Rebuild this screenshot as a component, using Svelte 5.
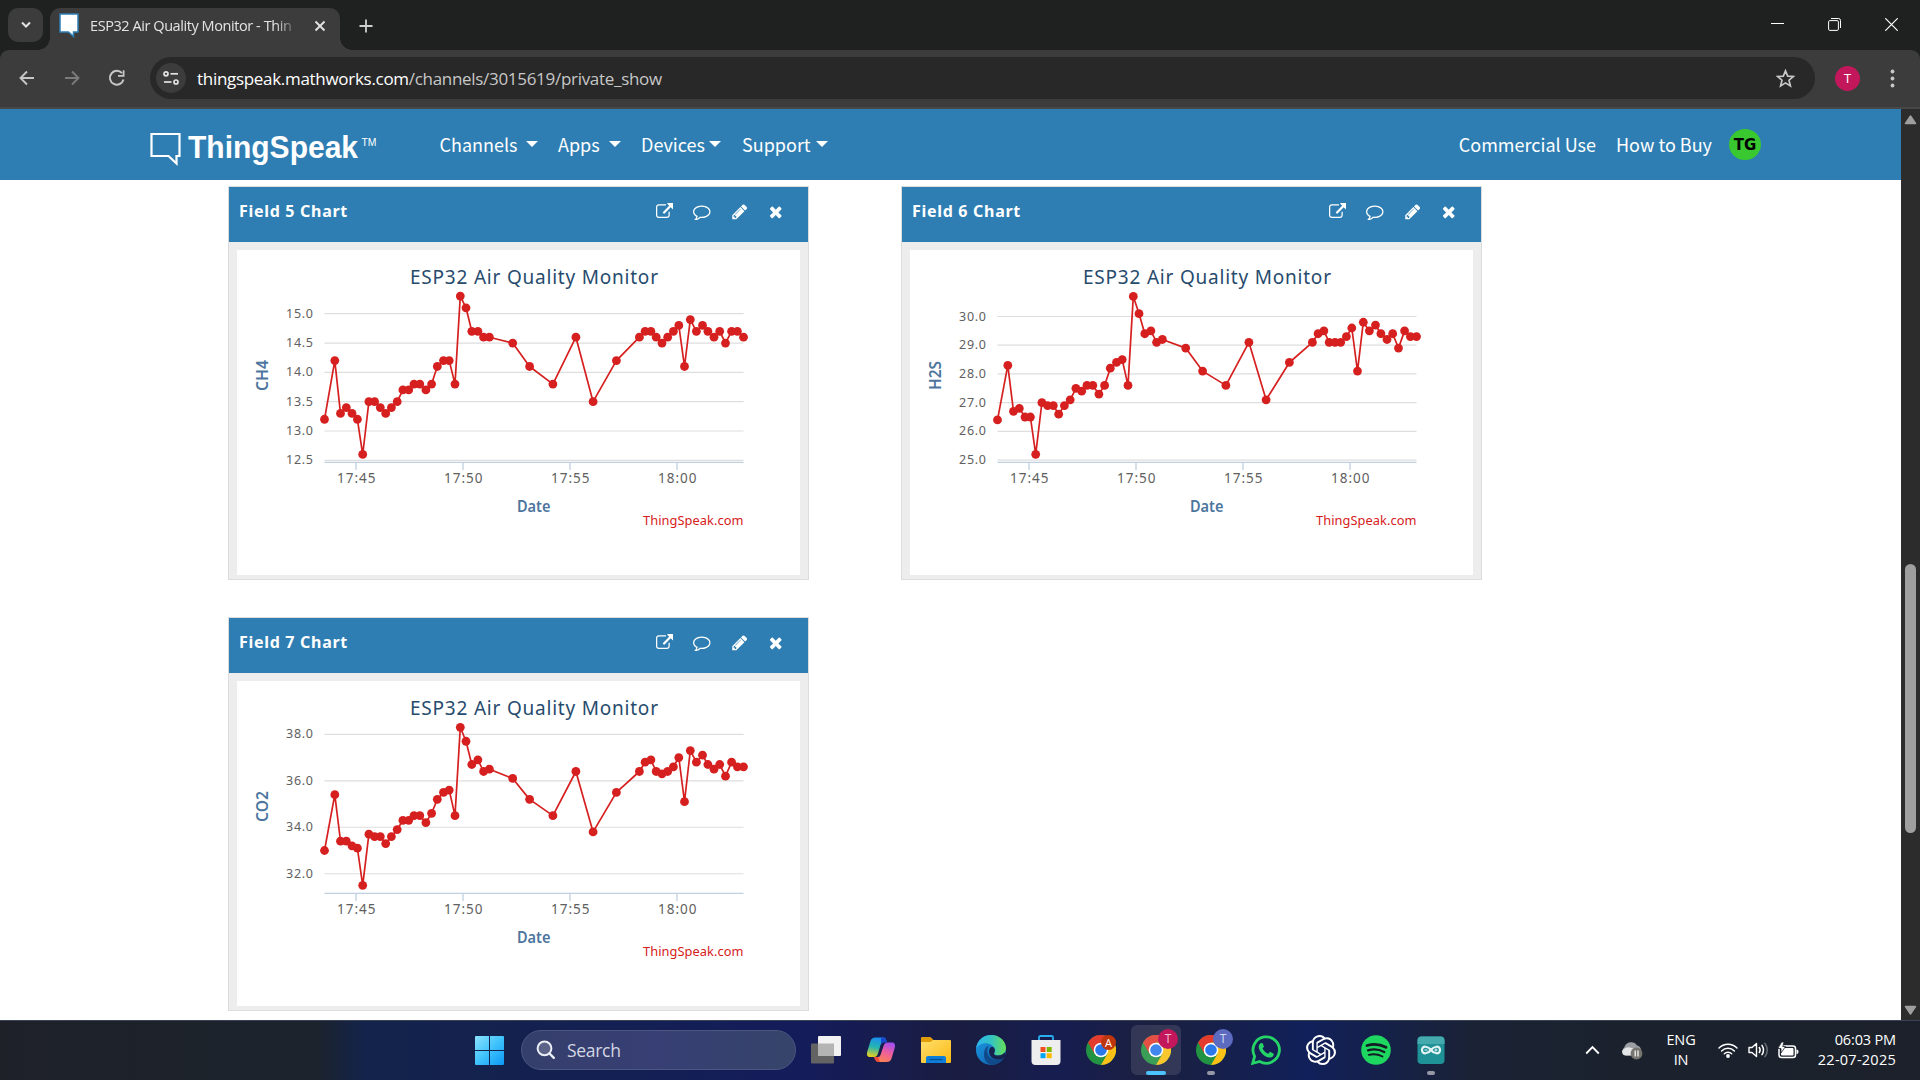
<script>
  // Horizontal sample positions shared by the three charts, in chart pixels
  const xs = [
    87.5, 97.8, 103.5, 109.3, 115, 120.4, 125.7, 131.9, 137.6, 143.3, 148.7, 154.4, 160.2, 165.9, 171.7, 177,
    182.8, 188.9, 194.6, 200.3, 206.5, 212.2, 218, 223.3, 229, 234.8, 240.9, 246.6, 252.4, 275.7, 292.6, 315.9,
    338.9, 356.1, 379.4, 402.4, 408.1, 413.9, 419.2, 425, 430.7, 436.4, 441.8, 447.5, 453.3, 459.4, 465.5,
    470.9, 477, 482.7, 488.5, 494.6, 500.4, 506.5
  ];

  const charts = [
    {
      name: 'Field 5 Chart', axis: 'CH4', ticks: [15, 14.5, 14, 13.5, 13, 12.5], top: 15, topY: 63.7, scale: 58.65,
      data: [13.2, 14.2, 13.3, 13.4, 13.3, 13.2, 12.6, 13.5, 13.5, 13.4, 13.3, 13.4, 13.5, 13.7, 13.7, 13.8, 13.8,
        13.7, 13.8, 14.1, 14.2, 14.2, 13.8, 15.3, 15.1, 14.7, 14.7, 14.6, 14.6, 14.5, 14.1, 13.8, 14.6, 13.5, 14.2,
        14.6, 14.7, 14.7, 14.6, 14.5, 14.6, 14.7, 14.8, 14.1, 14.9, 14.7, 14.8, 14.7, 14.6, 14.7, 14.5, 14.7, 14.7, 14.6]
    },
    {
      name: 'Field 6 Chart', axis: 'H2S', ticks: [30, 29, 28, 27, 26, 25], top: 30, topY: 66.5, scale: 28.72,
      data: [26.4, 28.3, 26.7, 26.8, 26.5, 26.5, 25.2, 27.0, 26.9, 26.9, 26.6, 26.9, 27.1, 27.5, 27.4, 27.6, 27.6,
        27.3, 27.6, 28.2, 28.4, 28.5, 27.6, 30.7, 30.1, 29.4, 29.5, 29.1, 29.2, 28.9, 28.1, 27.6, 29.1, 27.1, 28.4,
        29.1, 29.4, 29.5, 29.1, 29.1, 29.1, 29.3, 29.6, 28.1, 29.8, 29.5, 29.7, 29.4, 29.2, 29.4, 28.9, 29.5, 29.3, 29.3]
    },
    {
      name: 'Field 7 Chart', axis: 'CO2', ticks: [38, 36, 34, 32], top: 38, topY: 53.3, scale: 23.24,
      data: [33.0, 35.4, 33.4, 33.4, 33.2, 33.1, 31.5, 33.7, 33.6, 33.6, 33.3, 33.6, 33.9, 34.3, 34.3, 34.5, 34.5,
        34.2, 34.6, 35.2, 35.5, 35.6, 34.5, 38.3, 37.7, 36.7, 36.9, 36.4, 36.5, 36.1, 35.2, 34.5, 36.4, 33.8, 35.5,
        36.4, 36.8, 36.9, 36.4, 36.3, 36.4, 36.6, 37.0, 35.1, 37.3, 36.8, 37.1, 36.7, 36.5, 36.7, 36.2, 36.8, 36.6, 36.6]
    }
  ];

  const times = [['17:45', 119], ['17:50', 226], ['17:55', 333], ['18:00', 440]];
  const yOf = (c, v) => c.topY + (c.top - v) * c.scale;
  const line = (c) => c.data.map((v, i) => `${xs[i]},${yOf(c, v).toFixed(1)}`).join(' ');
</script>

{#snippet chrome()}
  <svg class="app-icon" viewBox="0 0 30 30">
    <circle cx="15" cy="15" r="15" fill="#229342" />
    <path d="M2 7.500A15 15 0 0 1 28 7.500H15L8.500 18.700z" fill="#e33b2e" />
    <path d="M28 7.500A15 15 0 0 1 15 30L21.500 18.750L15 7.500z" fill="#fbc116" />
    <circle cx="15" cy="15" r="7.300" fill="#fff" />
    <circle cx="15" cy="15" r="5.800" fill="#2a78ea" />
  </svg>
{/snippet}

<div class="screen">
  <header class="tabs">
    <button class="tab-search" aria-label="Search tabs">
      <svg width="12" height="8" viewBox="0 0 12 8"><path d="M2 1.500L6 5.500L10 1.500" fill="none" stroke="#e3e3e3" stroke-width="2" /></svg>
    </button>
    <div class="tab">
      <svg class="favicon" width="21" height="25" viewBox="0 0 21 25"><path d="M1 1H19V19H14.500V23.500L9.500 19H1z" fill="#fff" stroke="#2e7eb3" stroke-width="1.500" /></svg>
      <span class="tab-title">ESP32 Air Quality Monitor - Thin</span>
      <svg width="12" height="12" viewBox="0 0 12 12"><path d="M1.500 1.500L10.500 10.500M10.500 1.500L1.500 10.500" stroke="#e3e3e3" stroke-width="1.900" /></svg>
    </div>
    <svg class="plus" width="14" height="14" viewBox="0 0 14 14"><path d="M7 0.500V13.500M0.500 7H13.500" stroke="#d0d0d0" stroke-width="1.800" /></svg>
    <div class="window-buttons">
      <svg width="13" height="13" viewBox="0 0 13 13"><path d="M0 5.500H13" stroke="#fff" /></svg>
      <svg width="13" height="13" viewBox="0 0 13 13"><rect x="0.600" y="2.600" width="9.800" height="9.800" rx="1.200" fill="none" stroke="#fff" /><path d="M3 0.500H10.500Q12.500 0.500 12.500 2.500V10" fill="none" stroke="#fff" /></svg>
      <svg width="13" height="13" viewBox="0 0 13 13"><path d="M0.300 0.300L12.700 12.700M12.700 0.300L0.300 12.700" stroke="#fff" stroke-width="1.200" /></svg>
    </div>
  </header>

  <div class="toolbar">
    <svg class="nav-icon" width="20" height="20" viewBox="0 0 20 20"><path d="M17 10H4M10 3.500L3.500 10L10 16.500" fill="none" stroke="#c7c7c7" stroke-width="1.900" /></svg>
    <svg class="nav-icon" width="20" height="20" viewBox="0 0 20 20"><path d="M3 10H16M10 3.500L16.500 10L10 16.500" fill="none" stroke="#7b7b7b" stroke-width="1.900" /></svg>
    <svg class="nav-icon" width="20" height="20" viewBox="0 0 20 20"><path d="M16.500 11.500A6.900 6.900 0 1 1 15 5.200" fill="none" stroke="#c7c7c7" stroke-width="2" /><path d="M17.500 2.200V8.800H11V7L15.700 6.900V2.200z" fill="#c7c7c7" /></svg>
    <div class="address">
      <span class="site-info">
        <svg width="16" height="16" viewBox="0 0 16 16"><g fill="none" stroke="#e3e3e3" stroke-width="1.700"><circle cx="3" cy="3.800" r="2" /><path d="M7.500 3.800H15" /><circle cx="13" cy="12" r="2" /><path d="M1 12H8.500" /></g></svg>
      </span>
      <span class="url"><b>thingspeak.mathworks.com</b>/channels/3015619/private_show</span>
      <svg class="star" width="19" height="19" viewBox="0 0 19 19"><path d="M9.500 1.800L11.700 7.100L17.300 7.500L13 11.200L14.400 16.900L9.500 13.900L4.600 16.900L6 11.200L1.700 7.500L7.300 7.100z" fill="none" stroke="#c7c7c7" stroke-width="1.700" /></svg>
    </div>
    <span class="profile">T</span>
    <svg class="dots" width="5" height="19" viewBox="0 0 5 19"><g fill="#c7c7c7"><circle cx="2.500" cy="2.500" r="1.900" /><circle cx="2.500" cy="9.500" r="1.900" /><circle cx="2.500" cy="16.500" r="1.900" /></g></svg>
  </div>

  <div class="viewport">
    <main>
      <nav>
        <svg class="logo" width="228" height="36" viewBox="0 0 228 36">
          <path d="M1.500 3H29.500V25H26.500V32.500L18.500 25H1.500z" fill="none" stroke="#fff" stroke-width="2.200" />
          <text class="brand" x="38" y="27" textLength="170" lengthAdjust="spacingAndGlyphs">ThingSpeak</text>
          <text class="tm" x="211.500" y="14.500" textLength="15" lengthAdjust="spacingAndGlyphs">TM</text>
        </svg>
        <a class="menu channels" href="#channels">Channels<i></i></a>
        <a class="menu apps" href="#apps">Apps<i></i></a>
        <a class="menu devices" href="#devices">Devices<i></i></a>
        <a class="menu support" href="#support">Support<i></i></a>
        <a class="plain commercial" href="#commercial">Commercial Use</a>
        <a class="plain" href="#buy">How to Buy</a>
        <span class="user">TG</span>
      </nav>

      <section class="cards">
        {#each charts as c}
          <article class="card">
            <header>
              <h2>{c.name}</h2>
              <svg class="open" viewBox="0 0 1792 1792"><path d="M1408 928v320q0 119-84.500 203.500t-203.500 84.500h-832q-119 0-203.500-84.500t-84.500-203.500v-832q0-119 84.500-203.500t203.500-84.500h704q14 0 23 9t9 23v64q0 14-9 23t-23 9h-704q-66 0-113 47t-47 113v832q0 66 47 113t113 47h832q66 0 113-47t47-113v-320q0-14 9-23t23-9h64q14 0 23 9t9 23zm384-864v512q0 26-19 45t-45 19-45-19l-176-176-652 652q-10 10-23 10t-23-10l-114-114q-10-10-10-23t10-23l652-652-176-176q-19-19-19-45t19-45 45-19h512q26 0 45 19t19 45z" /></svg>
              <svg class="comment" viewBox="0 0 1792 1792"><path d="M896 384q-204 0-381.500 69.500t-282 187.500-104.500 255q0 112 71.500 213.500t201.500 175.500l87 50-27 96q-24 91-70 172 152-63 275-171l43-38 57 6q69 8 130 8 204 0 381.500-69.500t282-187.500 104.500-255-104.500-255-282-187.500-381.500-69.500zm896 512q0 174-120 321.500t-326 233-450 85.500q-70 0-145-8-198 175-460 242-49 14-114 22h-5q-15 0-27-10.500t-16-27.500v-1q-3-4-.5-12t2-10 4.500-9.500l6-9 7-8.500 8-9q7-8 31-34.500t34.500-38 31-39.500 32.500-51 27-59 26-76q-157-89-247.500-220t-90.500-281q0-174 120-321.500t326-233 450-85.500 450 85.500 326 233 120 321.500z" /></svg>
              <svg class="pencil" viewBox="0 0 1792 1792"><path d="M491 1536l91-91-235-235-91 91v107h128v128h107zm523-928q0-22-22-22-10 0-17 7l-542 542q-7 7-7 17 0 22 22 22 10 0 17-7l542-542q7-7 7-17zm-54-192l416 416-832 832h-416v-416zm683 96q0 53-37 90l-166 166-416-416 166-165q36-38 90-38 53 0 91 38l235 234q37 39 37 91z" /></svg>
              <svg class="times" viewBox="0 0 1792 1792"><path d="M1490 1322q0 40-28 68l-136 136q-28 28-68 28t-68-28l-294-294-294 294q-28 28-68 28t-68-28l-136-136q-28-28-28-68t28-68l294-294-294-294q-28-28-28-68t28-68l136-136q28-28 68-28t68 28l294 294 294-294q28-28 68-28t68 28l136 136q28 28 28 68t-28 68l-294 294 294 294q28 28 28 68z" /></svg>
            </header>
            <svg class="chart" width="563" height="325" viewBox="0 0 563 325">
              <text class="title" x="173" y="34" textLength="248">ESP32 Air Quality Monitor</text>
              {#each c.ticks as t}
                <path class="grid" d="M87.500 {yOf(c, t)}H506.500" />
                <text class="ylab" x="49" y={yOf(c, t) + 4} textLength="27">{t.toFixed(1)}</text>
              {/each}
              <path class="axis" d="M87.500 212.300H506.500" />
              {#each times as [label, x]}
                <path class="axis" d="M{x} 212V220" />
                <text class="xlab" x={x - 19} y="232.500" textLength="38.500">{label}</text>
              {/each}
              <text class="axis-name" x="280" y="262" textLength="33.500" lengthAdjust="spacingAndGlyphs">Date</text>
              <text class="axis-name" transform="translate(31 {c.axis === 'H2S' ? 140 : 141}) rotate(-90)" textLength={c.axis === 'H2S' ? 29 : 31} lengthAdjust="spacingAndGlyphs">{c.axis}</text>
              <text class="credit" x="406" y="275" textLength="100.500">ThingSpeak.com</text>
              <polyline points={line(c)} />
              {#each c.data as v, i}
                <circle cx={xs[i]} cy={yOf(c, v)} r="4.400" />
              {/each}
            </svg>
          </article>
        {/each}
      </section>
    </main>
    <aside class="scrollbar">
      <svg width="13" height="10" viewBox="0 0 13 10"><path d="M6.500 1L11.500 8.500H1.500z" fill="#9f9f9f" stroke="#9f9f9f" stroke-width="1.500" stroke-linejoin="round" /></svg>
      <div class="thumb"></div>
      <svg width="13" height="10" viewBox="0 0 13 10"><path d="M6.500 9L11.500 1.500H1.500z" fill="#9f9f9f" stroke="#9f9f9f" stroke-width="1.500" stroke-linejoin="round" /></svg>
    </aside>
  </div>

  <footer>
    <svg class="start" width="29" height="29" viewBox="0 0 29 29">
      <defs><linearGradient id="win" x2="1" y2="1"><stop stop-color="#8ce2fb" /><stop offset=".5" stop-color="#3fc3fc" /><stop offset="1" stop-color="#0d97f5" /></linearGradient></defs>
      <path d="M1 0H14V14H0V1Q0 0 1 0zM15 0H28Q29 0 29 1V14H15zM0 15H14V29H1Q0 29 0 28zM15 15H29V28Q29 29 28 29H15z" fill="url(#win)" />
    </svg>
    <div class="search">
      <svg width="20" height="20" viewBox="0 0 20 20"><circle cx="8.500" cy="8.300" r="6.900" fill="#ffffff30" stroke="#eceef5" stroke-width="2" /><path d="M13.500 13.500L17.800 17.800" stroke="#eceef5" stroke-width="2.400" stroke-linecap="round" /></svg>
      <span>Search</span>
    </div>

    <div class="apps-bar">
      <div class="slot">
        <svg class="app-icon" viewBox="0 0 30 30"><rect x="0" y="8.500" width="23" height="20" rx="1" fill="#636363" /><rect x="7" y="1" width="23" height="20" rx="1" fill="#f2f2f2" /><path d="M7 8.500H23V21H7z" fill="#b4b4b4" /></svg>
      </div>
      <div class="slot">
        <svg class="app-icon" viewBox="0 0 30 30">
          <defs>
            <linearGradient id="cpa" x1="0.500" y1="0" x2="0.300" y2="1"><stop stop-color="#1a8ff0" /><stop offset=".5" stop-color="#26b5b0" /><stop offset="1" stop-color="#e9d11e" /></linearGradient>
            <linearGradient id="cpb" x1="0.700" y1="0" x2="0.300" y2="1"><stop stop-color="#a44df0" /><stop offset=".5" stop-color="#f0609a" /><stop offset="1" stop-color="#fb8350" /></linearGradient>
          </defs>
          <path d="M9.500 2.500H17C19.500 2.500 20 4 20.700 7H17.500Q15.500 7 14.700 9.500L12 18.500Q11 22 8 22H4C1 22 .5 19.500 1.300 16.500L4.500 6Q5.500 2.500 9.500 2.500z" fill="url(#cpa)" />
          <path d="M15 2.500H17.500C20 2.500 20 4 21 7.500H17.500Q15.800 7.500 15 9.500z" fill="#1949cf" />
          <path d="M20.500 27H13C10.500 27 9.500 25.500 8.500 22H12Q14 22 14.700 19.500L17.500 11Q18.500 7.500 21.500 7.500H26C29 7.500 29.500 10 28.700 13L25.500 23.500Q24.500 27 20.500 27z" fill="url(#cpb)" />
          <path d="M8 22H12L14 26.800C10 27.500 9 25.500 8 22z" fill="#f04a36" />
        </svg>
      </div>
      <div class="slot">
        <svg class="app-icon" viewBox="0 0 30 30">
          <defs><linearGradient id="fold" x2="1" y2="1"><stop stop-color="#ffdf6d" /><stop offset="1" stop-color="#fcb912" /></linearGradient></defs>
          <path d="M0 3Q0 2 1 2H9Q10 2 11 3.500L13 5.500H20V12H0z" fill="#e19d09" />
          <path d="M0 7H9Q10.500 7 12 5H29Q30 5 30 6V27Q30 28 29 28H1Q0 28 0 27z" fill="url(#fold)" />
          <path d="M5 28V23Q5 21 7 21H23Q25 21 25 23V28z" fill="#0d7fd8" /><path d="M8.500 24.500H21.500" stroke="#0a4f93" stroke-width="1.300" />
        </svg>
      </div>
      <div class="slot">
        <svg class="app-icon" viewBox="0 0 30 30">
          <defs>
            <linearGradient id="eda" x2="1"><stop stop-color="#2fb4ee" /><stop offset=".5" stop-color="#33c3c4" /><stop offset="1" stop-color="#66df55" /></linearGradient>
            <linearGradient id="edb" x2="1" y2="1"><stop stop-color="#1d9be6" /><stop offset="1" stop-color="#0c59a4" /></linearGradient>
          </defs>
          <circle cx="15" cy="15" r="15" fill="url(#edb)" />
          <path d="M8 20C8 12 12 11 12.500 11C10 15 11 24 20 25Q25 25.500 28.500 21.500C26 27 21 30 16 30C11 29 8 25 8 20z" fill="#114a8b" />
          <path d="M0 14C1 5 7.500 0 15 0C24 0 30 6.500 30 13C30 18 26 20.500 22 20.500C19 20.500 17.500 19.300 18 18.300C19 17 19.500 14.500 18 12.500C14 6 3 7 0 14z" fill="url(#eda)" />
          <path d="M18 18.500C18 20 20 20.800 22 20.500Q26 20.500 29 17.500L30 21L26 24C20 26 13 23 13 16.500C13 13 15 11 17.500 12.300C19.500 14 19 17 18 18.500z" fill="#17224e" />
        </svg>
      </div>
      <div class="slot">
        <svg class="app-icon" viewBox="0 0 30 30"><path d="M8 6V2.500Q8 1 9.500 1H20.500Q22 1 22 2.500V6" fill="none" stroke="#29aef0" stroke-width="1.800" /><path d="M.5 5H29.500V26Q29.500 30 25.500 30H4.500Q.5 30 .5 26z" fill="#eeeeef" /><path d="M9.500 12H14.500V17H9.500z" fill="#f25022" /><path d="M15.700 12H20.700V17H15.700z" fill="#7fba00" /><path d="M9.500 18.200H14.500V23.200H9.500z" fill="#00a4ef" /><path d="M15.700 18.200H20.700V23.200H15.700z" fill="#ffb900" /></svg>
      </div>
      <div class="slot">{@render chrome()}<span class="badge small">A</span></div>
      <div class="slot active">{@render chrome()}<span class="badge pink">T</span></div>
      <div class="slot running">{@render chrome()}<span class="badge indigo">T</span></div>
      <div class="slot">
        <svg class="app-icon" viewBox="0 0 30 30"><path d="M1.700 28.300L3.600 21.300A13.200 13.200 0 1 1 8.700 26.500z" fill="none" stroke="#25d366" stroke-width="2.800" /><path d="M10.500 8C9.500 8 7.700 9.300 7.700 12C7.700 16 13.500 22.500 18.500 22.500C21.500 22.500 23 20.500 22.700 18.700L19 16.700L17.200 18.800C15 18 12.500 15.500 11.500 13.400L13 11.600L11.700 8.200z" fill="#25d366" /></svg>
      </div>
      <div class="slot">
        <svg class="app-icon" viewBox="0 0 24 24"><path fill="#fff" d="M22.282 9.821a5.985 5.985 0 0 0-.516-4.910 6.046 6.046 0 0 0-6.510-2.900A6.065 6.065 0 0 0 4.981 4.182a5.985 5.985 0 0 0-3.998 2.900 6.046 6.046 0 0 0 .743 7.097 5.980 5.980 0 0 0 .511 4.911 6.051 6.051 0 0 0 6.515 2.900A5.985 5.985 0 0 0 13.260 24a6.056 6.056 0 0 0 5.772-4.206 5.990 5.990 0 0 0 3.998-2.900 6.056 6.056 0 0 0-.748-7.073zM13.260 22.430a4.476 4.476 0 0 1-2.876-1.041l.142-.08 4.778-2.758a.795.795 0 0 0 .393-.682v-6.737l2.020 1.169a.071.071 0 0 1 .038.052v5.583a4.504 4.504 0 0 1-4.495 4.494zM3.600 18.304a4.471 4.471 0 0 1-.535-3.014l.142.085 4.783 2.759a.771.771 0 0 0 .781 0l5.843-3.369v2.332a.080.080 0 0 1-.033.062L9.740 19.950a4.499 4.499 0 0 1-6.140-1.646zM2.341 7.896a4.485 4.485 0 0 1 2.366-1.973V11.600a.766.766 0 0 0 .388.677l5.815 3.354-2.020 1.169a.076.076 0 0 1-.071 0l-4.830-2.787A4.504 4.504 0 0 1 2.341 7.872zm16.597 3.855l-5.833-3.387L15.119 7.200a.076.076 0 0 1 .071 0l4.830 2.791a4.494 4.494 0 0 1-.676 8.105v-5.678a.790.790 0 0 0-.406-.667zm2.010-3.023l-.142-.085-4.774-2.782a.776.776 0 0 0-.785 0L9.409 9.230V6.897a.066.066 0 0 1 .028-.061l4.830-2.787a4.499 4.499 0 0 1 6.681 4.660zM8.307 12.863l-2.020-1.164a.080.080 0 0 1-.038-.057V6.075a4.499 4.499 0 0 1 7.376-3.454l-.142.080L8.704 5.459a.795.795 0 0 0-.393.682zm1.097-2.365L12.006 9l2.607 1.500v2.999l-2.597 1.500-2.607-1.500z" /></svg>
      </div>
      <div class="slot">
        <svg class="app-icon" viewBox="0 0 30 30"><circle cx="15" cy="15" r="14.800" fill="#1ed760" /><g fill="none" stroke="#131c24" stroke-linecap="round"><path d="M6 10.500Q16 7.500 25 12.300" stroke-width="2.800" /><path d="M7 15.300Q15.500 12.800 23.300 17" stroke-width="2.300" /><path d="M7.800 19.800Q15 18 21.500 21.500" stroke-width="1.900" /></g></svg>
      </div>
      <div class="slot running">
        <svg class="app-icon" viewBox="0 0 30 30"><rect x="1.500" y="1.500" width="27" height="27.500" rx="4" fill="#1f9298" /><path d="M1.500 9V5.500Q1.500 1.500 5.500 1.500H24.500Q28.500 1.500 28.500 5.500V9z" fill="#44aaae" /><path d="M15 15C12.500 11.500 6 9.800 6 15S12.500 18.500 15 15S24 9.800 24 15S17.500 18.500 15 15z" fill="none" stroke="#e4f3f3" stroke-width="2.200" /><path d="M8.500 15H11.500M18.500 15H21.500M20 13.500V16.500" stroke="#e4f3f3" /></svg>
      </div>
    </div>

    <div class="tray">
      <svg class="chevron" width="15" height="10" viewBox="0 0 15 10"><path d="M1.200 8.500L7.500 2L13.800 8.500" fill="none" stroke="#fff" stroke-width="1.800" /></svg>
      <svg class="cloud" width="22" height="19" viewBox="0 0 22 19"><path d="M5 14.500A5 5 0 0 1 3.500 6A7 7 0 0 1 16 4.500A5 5 0 0 1 17 14z" fill="#9b9ea2" /><path d="M1 10Q6 3 15 9L11 14.500H5Q1 14.500 1 10z" fill="#e4e5e6" /><circle cx="15.500" cy="12.500" r="5.900" fill="#77756f" /><path d="M14.200 9.500V15.500M17 9.500V15.500" stroke="#fff" stroke-width="1.200" /></svg>
      <div class="lang"><span>ENG</span><span>IN</span></div>
      <svg class="wifi" width="20" height="16" viewBox="0 0 20 16"><g fill="none" stroke="#fff" stroke-width="1.500" stroke-linecap="round"><path d="M1 6A12.500 12.500 0 0 1 19 6" /><path d="M3.600 9A9 9 0 0 1 16.400 9" /><path d="M6.300 11.800A5.200 5.200 0 0 1 13.700 11.800" /></g><circle cx="10" cy="14" r="1.900" fill="#fff" /></svg>
      <svg class="sound" width="21" height="18" viewBox="0 0 21 18"><path d="M1 6.500H4L8.500 2.500V15.500L4 11.500H1z" fill="none" stroke="#fff" stroke-width="1.400" stroke-linejoin="round" /><g fill="none" stroke-width="1.500" stroke-linecap="round"><path d="M11.300 6.500Q13 9 11.300 11.500M14 4.300Q17 9 14 13.700" stroke="#fff" /><path d="M17 2.300Q21.500 9 17 15.700" stroke="#686d75" /></g></svg>
      <svg class="battery" width="21" height="17" viewBox="0 0 21 17"><rect x="1" y="4" width="16.500" height="11.500" rx="2.500" fill="none" stroke="#fff" stroke-width="1.500" /><rect x="3" y="6" width="12.500" height="7.500" rx="1" fill="#fff" /><path d="M18.500 7.500Q20.500 7.500 20.500 9.800T18.500 12z" fill="#fff" /><path d="M3.500 0L0 6.500H3V11L7.500 4.500H4.700L6 0z" fill="#fff" stroke="#1c222d" stroke-width=".8" /></svg>
      <div class="clock"><span>06:03 PM</span><span class="date">22-07-2025</span></div>
    </div>
  </footer>
</div>

<style>
  :global(body) { margin: 0; overflow: hidden; }
  .screen { width: 1920px; height: 1080px; display: flex; flex-direction: column; background: #fff; font-family: "Open Sans", "Noto Sans", sans-serif; }
  svg { display: block; flex: none; }

  .tabs { position: relative; z-index: 1; height: 50px; background: #1f2120; display: flex; align-items: flex-start; box-sizing: border-box; padding: 8px 0 0 8px; }
  .tab-search { width: 35px; height: 34px; border: 0; border-radius: 10px; background: #3c3c3c; padding: 0; display: grid; place-items: center; }
  .tab { width: 290px; height: 42px; margin-left: 7px; box-sizing: border-box; padding: 0 14px 7px 9px; border-radius: 10px 10px 0 0; background: #3c3c3c; display: flex; align-items: center; position: relative; }
  .tab::before, .tab::after { content: ""; position: absolute; bottom: 0; width: 12px; height: 12px; }
  .tab::before { left: -12px; background: radial-gradient(circle at 0 0, transparent 11.5px, #3c3c3c 12px); }
  .tab::after { right: -12px; background: radial-gradient(circle at 100% 0, transparent 11.5px, #3c3c3c 12px); }
  .favicon { margin-right: 10px; }
  .tab-title { width: 209px; margin-right: 16px; overflow: hidden; white-space: nowrap; font-size: 14.500px; letter-spacing: -0.430px; color: #e3e3e3; mask-image: linear-gradient(90deg, #000 185px, transparent 209px); }
  .plus { margin: 11px 0 0 19px; }
  .window-buttons { margin: 10px 22px 0 auto; display: flex; gap: 44px; }

  .toolbar { height: 59px; box-sizing: border-box; padding: 0 0 1px 17px; background: #3c3c3c; border-bottom: 2px solid #484848; border-radius: 9px 9px 0 0; box-shadow: 0 -10px 0 #1f2120; display: flex; align-items: center; }
  .nav-icon { margin-right: 25px; }
  .address { width: 1665px; height: 42px; margin-left: -2px; border-radius: 21px; background: #282828; display: flex; align-items: center; }
  .site-info { width: 30px; height: 30px; margin-left: 6px; border-radius: 50%; background: #3c3c3c; display: grid; place-items: center; }
  .url { margin: 1px 0 0 11px; color: #c7c7c7; font-size: 17px; letter-spacing: -0.300px; white-space: nowrap; }
  .url b { color: #fff; font-weight: 400; }
  .star { margin-left: auto; margin-right: 20px; }
  .profile { width: 25px; height: 25px; margin-left: 20px; border-radius: 50%; background: #c2185b; color: #fff; font-size: 13px; line-height: 25px; text-align: center; }
  .dots { margin-left: 30px; }

  .viewport { height: 911px; display: flex; }
  main { width: 1901px; background: #fff; overflow: hidden; }
  nav { height: 71px; background: #2e7eb3; display: flex; align-items: center; font: 18px/28px "Noto Sans CJK SC", sans-serif; }
  nav a { color: #fff; text-decoration: none; white-space: nowrap; margin-bottom: 1px; }
  .logo { margin: 9px 0 0 150px; fill: #fff; }
  .brand { font: 700 32px "Liberation Sans", sans-serif; }
  .tm { font: 10px "Liberation Sans", sans-serif; }
  .menu { display: flex; align-items: center; box-sizing: border-box; }
  .menu i { margin-left: auto; border: 6px solid transparent; border-top-color: #fff; border-bottom: 0; }
  .channels { width: 98px; margin-left: 61.500px; }
  .apps { width: 63px; margin-left: 20.500px; }
  .devices { width: 80px; margin-left: 20px; }
  .support { width: 86px; margin-left: 21px; }
  .commercial { margin-left: auto; margin-right: 20px; }
  .user { width: 32px; height: 31px; border-radius: 50%; background: #3ac830; color: #000; font: 700 15px/33px "DejaVu Sans", sans-serif; text-align: center; margin: 0 140px 0 17px; }

  .cards { padding: 6px 0 0 228px; display: grid; grid-template-columns: 581px 581px; column-gap: 92px; row-gap: 37px; }
  .card { height: 394px; box-sizing: border-box; border: 1px solid #dcdcdc; background: #ededed; }
  .card header { height: 55px; background: #2e7eb3; display: flex; align-items: flex-start; }
  h2 { margin: 12px auto 0 10px; font: 700 16px/24px "Noto Sans", sans-serif; letter-spacing: 0.700px; color: #fff; white-space: nowrap; }
  .card header svg { width: 17.500px; height: 17.500px; fill: #fff; margin-top: 15.500px; }
  .card header .comment { margin-left: 20px; }
  .card header .pencil { margin-left: 20.500px; }
  .card header .times { margin: 15.500px 24px 0 18px; }
  .chart { margin: 8px 0 0 8px; background: #fff; font-family: "Noto Sans", sans-serif; }
  .title { font-size: 19px; fill: #274b6d; }
  .grid { stroke: #dedede; stroke-width: 1.200; }
  .ylab { font-size: 12.500px; fill: #606060; }
  .xlab { font-size: 13.500px; fill: #606060; }
  .axis { stroke: #c0d0e0; stroke-width: 1.300; }
  .axis-name { font-size: 15.500px; font-weight: 600; fill: #4d759e; }
  .credit { font-size: 12.800px; fill: #d62020; }
  polyline { fill: none; stroke: #d62020; stroke-width: 1.700; stroke-linejoin: round; }
  .chart circle { fill: #d62020; }

  .scrollbar { width: 19px; background: #2c2c2c; display: flex; flex-direction: column; align-items: center; box-sizing: border-box; padding: 6px 0 5px; }
  .thumb { width: 11px; height: 269px; margin: 439px 0 auto; border-radius: 6px; background: #9f9f9f; }

  footer { height: 60px; box-sizing: border-box; padding-bottom: 1px; border-top: 1px solid #3a4353; background: linear-gradient(90deg, #1e2128 0, #1c232d 16.5%, #13234b 19%, #14224e 25%, #141c5a 42%, #1a1d40 50%, #161d50 55%, #1b2040 60%, #11205a 68%, #1a2234 77%, #1b222d 85%, #1c212b 100%); display: flex; align-items: center; color: #fff; }
  .start { margin-left: 475px; }
  .search { width: 275px; height: 40px; box-sizing: border-box; margin-left: 17px; padding-left: 14px; border: 1px solid #4d5680; border-radius: 20px; background: linear-gradient(90deg, #353f6b, #373f74 50%, #36446a); display: flex; align-items: center; gap: 11px; font-size: 17.500px; color: #d3d6e3; letter-spacing: -0.300px; }
  .apps-bar { display: flex; margin-left: 2px; }
  .slot { width: 55px; height: 58px; display: grid; place-items: center; position: relative; }
  .app-icon { width: 30px; height: 30px; }
  .active::before { content: ""; position: absolute; width: 50px; height: 50px; border-radius: 6px; background: #ffffff1c; }
  .active::after, .running::after { content: ""; position: absolute; bottom: 4px; width: 8px; height: 4px; border-radius: 2px; background: #9698a6; }
  .active::after { width: 20px; background: #4cc2ff; }
  .badge { position: absolute; left: 30px; top: 8px; width: 20px; height: 20px; border-radius: 50%; font-size: 12px; line-height: 20px; text-align: center; }
  .pink { background: #c2185b; color: #f1bdd0; }
  .indigo { background: #5c6bc0; color: #d5daf5; }
  .small { left: 28px; top: 14px; width: 15px; height: 15px; background: #bf360c; font-size: 11px; line-height: 15px; }

  .tray { margin-left: auto; margin-right: 24px; display: flex; align-items: center; font-size: 14.500px; line-height: 20px; letter-spacing: -0.150px; }
  .cloud { margin-left: 21px; }
  .lang { width: 32px; margin-left: 22px; display: flex; flex-direction: column; align-items: center; }
  .wifi { margin-left: 21px; }
  .sound { margin-left: 10px; }
  .battery { margin-left: 9px; }
  .clock { width: 97px; display: flex; flex-direction: column; align-items: flex-end; white-space: nowrap; }
  .date { letter-spacing: 0.250px; }
</style>
